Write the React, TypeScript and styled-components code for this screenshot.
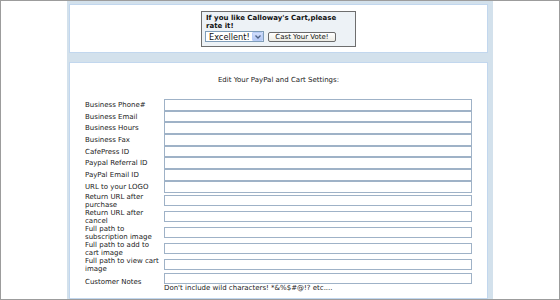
import React from 'react';
import styled, { createGlobalStyle } from 'styled-components';

const GlobalStyle = createGlobalStyle`
    body {
        margin: 0;
        background: #fff;
        font-family: "DejaVu Sans", Verdana, sans-serif;
        color: #222;
    }
`;

const fields = [
    { id: 1, lines: ['Business Phone#'] },
    { id: 2, lines: ['Business Email'] },
    { id: 3, lines: ['Business Hours'] },
    { id: 4, lines: ['Business Fax'] },
    { id: 5, lines: ['CafePress ID'] },
    { id: 6, lines: ['Paypal Referral ID'] },
    { id: 7, lines: ['PayPal Email ID'] },
    { id: 8, lines: ['URL to your LOGO'] },
    { id: 9, lines: ['Return URL after', 'purchase'] },
    { id: 10, lines: ['Return URL after', 'cancel'] },
    { id: 11, lines: ['Full path to', 'subscription image'] },
    { id: 12, lines: ['Full path to add to', 'cart image'] },
    { id: 13, lines: ['Full path to view cart', 'image'] },
    { id: 14, lines: ['Customer Notes'], note: "Don't include wild characters! *&%$#@!? etc...." },
];

const Frame = styled.div`
    width: 560px;
    height: 300px;
    box-sizing: border-box;
    border: 1px solid #9c9c9c;
    overflow: hidden;
    padding-left: 66px;
    background: #fff;
`;

const Column = styled.div`
    width: 426px;
    height: 100%;
    box-sizing: border-box;
    background: #d3e1ec;
    padding: 3px 5px 0 2px;
    display: flex;
    flex-direction: column;
    gap: 9px;
`;

const Panel = styled.div<{ $top?: boolean }>`
    background: #fff;
    border: 1px solid #c2d7ee;
    box-sizing: border-box;
    ${(p) => (p.$top ? 'height: 49px; padding-top: 6px; display: flex; justify-content: center;' : 'flex: 1; padding-top: 13px;')}
`;

const VoteBox = styled.div`
    width: 155px;
    height: 36px;
    box-sizing: border-box;
    border: 1px solid #6e6e6e;
    background: #edf2f6;
    padding: 2px 3px 0 3px;
`;

const VoteTitle = styled.div`
    font-weight: bold;
    font-size: 7px;
    line-height: 8px;
    color: #111;
    padding-left: 1px;
`;

const VoteRow = styled.div`
    display: flex;
    align-items: flex-end;
    gap: 4px;
    margin-top: 1px;
`;

const SelectBox = styled.div`
    width: 59px;
    height: 11px;
    box-sizing: border-box;
    border: 1px solid #7f9db9;
    background: #fff;
    display: flex;
    align-items: center;
    justify-content: space-between;
    padding-left: 3px;
    font-size: 8.2px;
    color: #111;
`;

const ArrowBtn = styled.div`
    width: 11px;
    height: 9px;
    box-sizing: border-box;
    border: 1px solid #b9cdf7;
    border-radius: 1px;
    background: linear-gradient(#d2defb, #b4c8f4);
    display: flex;
    align-items: center;
    justify-content: center;
`;

const VoteButton = styled.button`
    width: 68px;
    height: 10px;
    box-sizing: border-box;
    padding: 0;
    border: 1px solid #6b6b6b;
    border-radius: 2px;
    background: linear-gradient(#ffffff, #ecebe4);
    font-family: "DejaVu Sans", Verdana, sans-serif;
    font-size: 7px;
    line-height: 8px;
    color: #111;
`;

const Title = styled.div`
    text-align: center;
    font-size: 7px;
    line-height: 8px;
    color: #222;
`;

const Form = styled.div`
    width: 387px;
    margin: 15px auto 0;
`;

const Row = styled.div`
    display: grid;
    grid-template-columns: 79px 308px;
    align-items: center;
`;

const Label = styled.div`
    font-size: 7px;
    line-height: 8px;
    color: #222;
    white-space: nowrap;
`;

const Input = styled.div`
    width: 308px;
    height: 11.7px;
    box-sizing: border-box;
    border: 1px solid #9fb2c7;
    background: #fff;
`;

const Note = styled.div`
    font-size: 7px;
    line-height: 8px;
    color: #222;
`;

const App = () => {
    return (
        <>
            <GlobalStyle />
            <Frame>
                <Column>
                    <Panel $top>
                        <VoteBox>
                            <VoteTitle>
                                If you like Calloway's Cart,please
                                <br />
                                rate it!
                            </VoteTitle>
                            <VoteRow>
                                <SelectBox>
                                    <span>Excellent!</span>
                                    <ArrowBtn>
                                        <svg width="6" height="4" viewBox="0 0 6 4">
                                            <path d="M0.5 0.5 L3 3 L5.5 0.5" fill="none" stroke="#4d6185" strokeWidth="1.3" />
                                        </svg>
                                    </ArrowBtn>
                                </SelectBox>
                                <VoteButton>Cast Your Vote!</VoteButton>
                            </VoteRow>
                        </VoteBox>
                    </Panel>
                    <Panel>
                        <Title>Edit Your PayPal and Cart Settings:</Title>
                        <Form>
                            {fields.map((field) => (
                                <Row key={field.id}>
                                    <Label>
                                        {field.lines.map((line, i) => (
                                            <div key={i}>{line}</div>
                                        ))}
                                    </Label>
                                    <div>
                                        <Input />
                                        {field.note && <Note>{field.note}</Note>}
                                    </div>
                                </Row>
                            ))}
                        </Form>
                    </Panel>
                </Column>
            </Frame>
        </>
    );
};

export default App;
